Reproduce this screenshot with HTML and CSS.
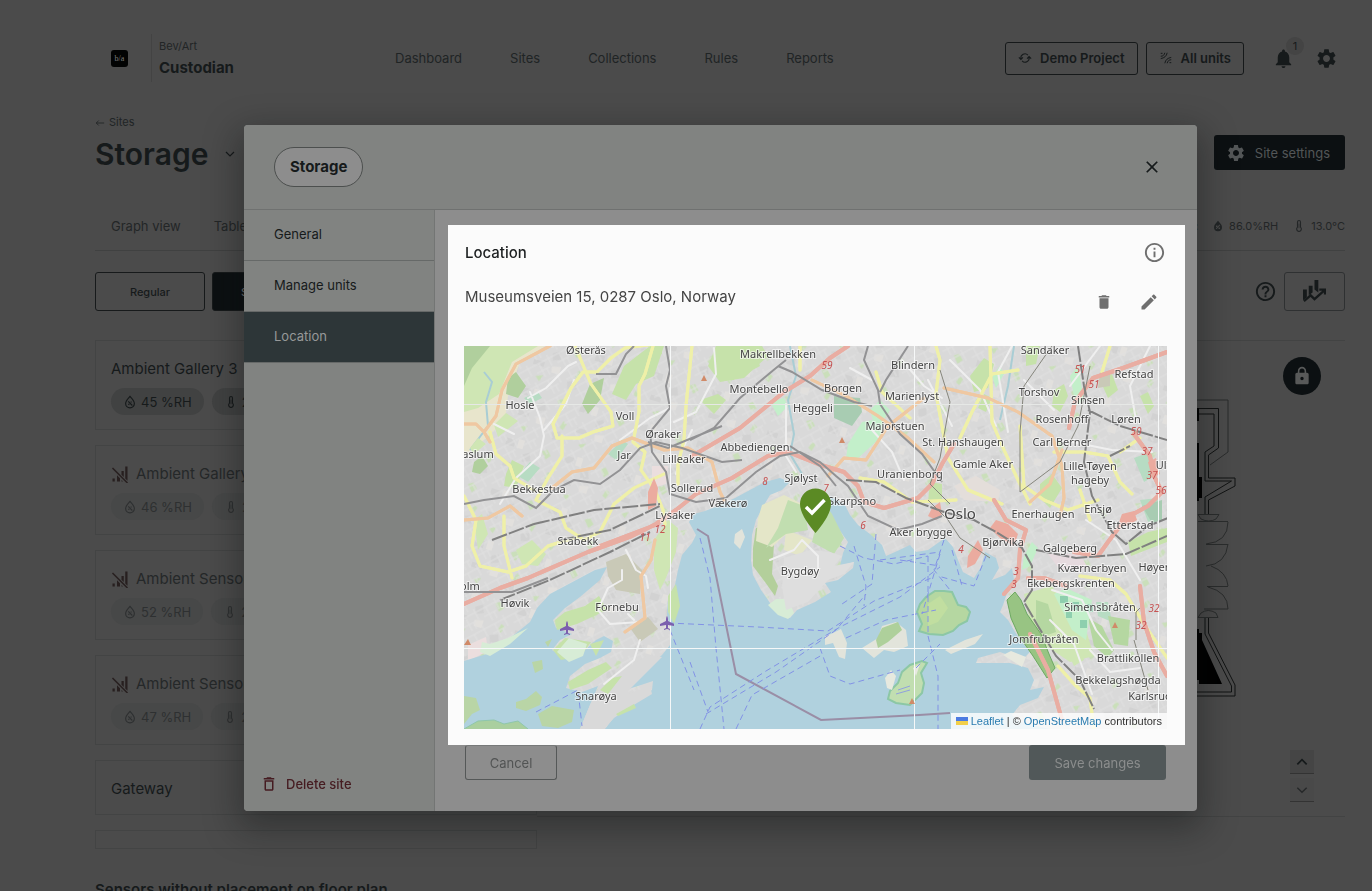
FILE: index.html
```html
<!DOCTYPE html>
<html lang="en">
<head>
<meta charset="utf-8">
<meta name="viewport" content="width=device-width, initial-scale=1">
<title>Custodian – Storage</title>
<link rel="stylesheet" href="styles.css">
</head>
<body>
<svg class="sprite" aria-hidden="true">
  <symbol id="i-gear" viewBox="0 0 24 24"><path d="M19.14 12.94c.04-.3.06-.61.06-.94 0-.32-.02-.64-.07-.94l2.03-1.58c.18-.14.23-.41.12-.61l-1.92-3.32c-.12-.22-.37-.29-.59-.22l-2.39.96c-.5-.38-1.03-.7-1.62-.94l-.36-2.54c-.04-.24-.24-.41-.48-.41h-3.84c-.24 0-.43.17-.47.41l-.36 2.54c-.59.24-1.13.57-1.62.94l-2.39-.96c-.22-.08-.47 0-.59.22L2.74 8.87c-.12.21-.08.47.12.61l2.03 1.58c-.05.3-.09.63-.09.94s.02.64.07.94l-2.03 1.58c-.18.14-.23.41-.12.61l1.92 3.32c.12.22.37.29.59.22l2.39-.96c.5.38 1.03.7 1.62.94l.36 2.54c.05.24.24.41.48.41h3.84c.24 0 .44-.17.47-.41l.36-2.54c.59-.24 1.13-.56 1.62-.94l2.39.96c.22.08.47 0 .59-.22l1.92-3.32c.12-.22.07-.47-.12-.61l-2.01-1.58zM12 15.6c-1.98 0-3.6-1.62-3.6-3.6s1.62-3.6 3.6-3.6 3.6 1.62 3.6 3.6-1.62 3.6-3.6 3.6z"/></symbol>
  <symbol id="i-bell" viewBox="0 0 24 24"><path d="M12 22c1.1 0 2-.9 2-2h-4c0 1.1.9 2 2 2zm6-6v-5c0-3.070-1.640-5.640-4.500-6.320V4c0-.83-.67-1.500-1.500-1.500s-1.500.67-1.500 1.500v.68C7.630 5.360 6 7.920 6 11v5l-2 2v1h16v-1l-2-2z"/></symbol>
  <symbol id="i-sync" viewBox="0 0 24 24"><g fill="none" stroke="currentColor" stroke-width="1.8"><path d="M5 13a7 7 0 0 1 12-6M19 11a7 7 0 0 1-12 6M1.500 11L5 14.500 8.500 11M15.500 13L19 9.500 22.500 13"/></g></symbol>
  <symbol id="i-units" viewBox="0 0 24 24"><g fill="none" stroke="currentColor" stroke-width="1.700"><path d="M3 4h3M3 9c4 0 6-2 7-6M3 13c6-1 10-4 11-10M21 20h-3M21 15c-4 0-6 2-7 6M21 11c-6 1-10 4-11 10"/></g></symbol>
  <symbol id="i-down" viewBox="0 0 24 24"><path fill="none" stroke="currentColor" stroke-width="2.400" d="M4 8l8 8 8-8"/></symbol>
  <symbol id="i-up" viewBox="0 0 24 24"><path fill="none" stroke="currentColor" stroke-width="3" d="M4 16l8-8 8 8"/></symbol>
  <symbol id="i-back" viewBox="0 0 24 24"><path fill="none" stroke="currentColor" stroke-width="2" d="M22 12H3M9 6l-6 6 6 6"/></symbol>
  <symbol id="i-drop" viewBox="0 0 24 24"><path fill="none" stroke="currentColor" stroke-width="2" d="M12 2.500C8 7 4.500 10.500 4.500 14.500a7.500 7.500 0 0 0 15 0C19.500 10.500 16 7 12 2.500zM9 11l7 7M9 16h2M13 12h2"/></symbol>
  <symbol id="i-dropfill" viewBox="0 0 24 24"><path fill-rule="evenodd" d="M12 1.500C8 6 4 10 4 14.500a8 8 0 0 0 16 0C20 10 16 6 12 1.500zM8 11h3v3H8zM13 15h3v3h-3zM15 9l1.500 1.500-7.500 8L7.500 17z"/></symbol>
  <symbol id="i-thermo" viewBox="0 0 24 24"><path fill="none" stroke="currentColor" stroke-width="2" d="M9.500 14V5a2.500 2.500 0 0 1 5 0v9a4 4 0 1 1-5 0z"/><path d="M11.500 8h1v8h-1z"/></symbol>
  <symbol id="i-nosignal" viewBox="0 0 24 24"><path d="M2 18h3v4H2zM8 13.500l4 4V22H8zM14 20l2 2h-2zM14 8h3v8l-3-3zM19 2h3v19l-3-3z"/><path fill="none" stroke="currentColor" stroke-width="2" d="M2 4l20 20"/></symbol>
  <symbol id="i-help" viewBox="0 0 24 24"><path d="M11 18h2v-2h-2v2zm1-16C6.480 2 2 6.480 2 12s4.480 10 10 10 10-4.480 10-10S17.520 2 12 2zm0 18c-4.410 0-8-3.590-8-8s3.590-8 8-8 8 3.590 8 8-3.590 8-8 8zm0-14c-2.210 0-4 1.790-4 4h2c0-1.100.9-2 2-2s2 .9 2 2c0 2-3 1.750-3 5h2c0-2.250 3-2.500 3-5 0-2.210-1.790-4-4-4z"/></symbol>
  <symbol id="i-info" viewBox="0 0 24 24"><path d="M11 7h2v2h-2zm0 4h2v6h-2zm1-9C6.480 2 2 6.480 2 12s4.480 10 10 10 10-4.480 10-10S17.520 2 12 2zm0 18c-4.410 0-8-3.590-8-8s3.590-8 8-8 8 3.590 8 8-3.590 8-8 8z"/></symbol>
  <symbol id="i-chart" viewBox="0 0 24 24"><path d="M0 10h4v8l-4 3zM6 6h4v7l-4 3zM12 0h4v13l-4-3z"/><path fill="none" stroke="currentColor" stroke-width="2.400" d="M1 22l7-6 4 4 10-9M17 10h6v5"/></symbol>
  <symbol id="i-lock" viewBox="0 0 24 24"><path d="M18 8h-1V6c0-2.760-2.240-5-5-5S7 3.240 7 6v2H6c-1.100 0-2 .9-2 2v10c0 1.100.9 2 2 2h12c1.100 0 2-.9 2-2V10c0-1.100-.9-2-2-2zm-6 9c-1.100 0-2-.9-2-2s.9-2 2-2 2 .9 2 2-.9 2-2 2zm3.100-9H8.900V6c0-1.710 1.390-3.100 3.100-3.100 1.710 0 3.100 1.390 3.100 3.100v2z"/></symbol>
  <symbol id="i-close" viewBox="0 0 24 24"><path d="M19 6.410L17.590 5 12 10.590 6.410 5 5 6.410 10.590 12 5 17.590 6.410 19 12 13.410 17.590 19 19 17.590 13.410 12z"/></symbol>
  <symbol id="i-trash" viewBox="0 0 24 24"><path d="M6 19c0 1.100.9 2 2 2h8c1.100 0 2-.9 2-2V7H6v12zM19 4h-3.500l-1-1h-5l-1 1H5v2h14V4z"/></symbol>
  <symbol id="i-trashline" viewBox="0 0 24 24"><path d="M6 19c0 1.100.9 2 2 2h8c1.100 0 2-.9 2-2V7H6v12zM8 9h8v10H8V9zm7.500-5l-1-1h-5l-1 1H5v2h14V4z"/></symbol>
  <symbol id="i-edit" viewBox="0 0 24 24"><path d="M3 17.250V21h3.750L17.810 9.940l-3.750-3.750L3 17.250zM20.710 7.040c.39-.39.39-1.020 0-1.410l-2.340-2.340c-.39-.39-1.020-.39-1.410 0l-1.830 1.830 3.750 3.750 1.830-1.830z"/></symbol>
</svg>

<div class="page">
  <header class="topbar">
    <div class="brand">
      <span class="logo">b/a</span>
      <div class="brand-text"><span class="brand-sub">Bev/Art</span><strong class="brand-name">Custodian</strong></div>
    </div>
    <nav class="nav">
      <a href="#">Dashboard</a><a href="#">Sites</a><a href="#">Collections</a><a href="#">Rules</a><a href="#">Reports</a>
    </nav>
    <div class="actions">
      <button class="outline-btn"><svg class="icon s14"><use href="#i-sync"/></svg>Demo Project</button>
      <button class="outline-btn"><svg class="icon s14"><use href="#i-units"/></svg>All units</button>
      <button class="bare bell" aria-label="Notifications"><svg class="icon s24"><use href="#i-bell"/></svg><span class="badge">1</span></button>
      <button class="bare" aria-label="Settings"><svg class="icon s24"><use href="#i-gear"/></svg></button>
    </div>
  </header>

  <main>
    <div class="title-row">
      <div>
        <a class="back" href="#"><svg class="icon s10"><use href="#i-back"/></svg>Sites</a>
        <h1 class="title">Storage<svg class="icon s12"><use href="#i-down"/></svg></h1>
      </div>
      <button class="dark-btn"><svg class="icon s20"><use href="#i-gear"/></svg>Site settings</button>
    </div>

    <div class="tabs">
      <a href="#">Graph view</a><a href="#">Table view</a>
      <div class="stats"><span>Oslo:</span><span><svg class="icon s12"><use href="#i-dropfill"/></svg>86.0%RH</span><span><svg class="icon s14"><use href="#i-thermo"/></svg>13.0°C</span></div>
    </div>

    <div class="tools">
      <button class="mode-btn">Regular</button>
      <button class="mode-btn mode-on">Simplified</button>
      <button class="bare help" aria-label="Help"><svg class="icon s24"><use href="#i-help"/></svg></button>
      <button class="chart-btn" aria-label="Graphs"><svg class="icon s24"><use href="#i-chart"/></svg></button>
    </div>

    <div class="workspace">
      <div class="list">
        <article class="card"><h2>Ambient Gallery 3</h2><div class="chips"><span><svg class="icon s14"><use href="#i-drop"/></svg>45 %RH</span><span><svg class="icon s14"><use href="#i-thermo"/></svg>21 °C</span></div></article>
        <article class="card muted"><h2><svg class="icon s18"><use href="#i-nosignal"/></svg>Ambient Gallery</h2><div class="chips"><span><svg class="icon s14"><use href="#i-drop"/></svg>46 %RH</span><span><svg class="icon s14"><use href="#i-thermo"/></svg>21 °C</span></div></article>
        <article class="card muted"><h2><svg class="icon s18"><use href="#i-nosignal"/></svg>Ambient Sensor</h2><div class="chips"><span><svg class="icon s14"><use href="#i-drop"/></svg>52 %RH</span><span><svg class="icon s14"><use href="#i-thermo"/></svg>21 °C</span></div></article>
        <article class="card muted"><h2><svg class="icon s18"><use href="#i-nosignal"/></svg>Ambient Sensor</h2><div class="chips"><span><svg class="icon s14"><use href="#i-drop"/></svg>47 %RH</span><span><svg class="icon s14"><use href="#i-thermo"/></svg>21 °C</span></div></article>
        <article class="card card-short"><h2>Gateway</h2></article>
        <article class="card-empty"></article>
      </div>
      <section class="plan" aria-label="Floor plan">
        <svg class="plan-drawing" viewBox="1180 390 70 320" aria-hidden="true">
          <path class="thin" d="M1180 401H1228V453L1210 466"/>
          <path class="wall" d="M1180 409.500H1218.500V449L1208.500 456V479H1235V487L1208.500 501V515M1180 415H1214V447L1205 453V482M1205 482H1231.500L1205 498V515M1208.500 618V634L1235 686V697H1180M1205 618V635L1231.500 687V693H1180"/>
          <path class="thin" d="M1198 515.500H1219L1216 520Q1209 524 1201 520ZM1198 522.500H1228M1228 523Q1228 543 1206 545M1228 545Q1226 565 1206 567M1211 567Q1227 573 1228 587M1208 588Q1228 593 1228 610M1206 545.500H1228M1207 587.500H1228M1204 610H1228M1198 618.500H1218L1216 614Q1208 609 1201 614Z"/>
          <path d="M1180 409h19v13h-19zM1180 444h19v34h3v21h-3v3h-19zM1180 630h19v4h3v7l20 44h-23v-4h-19z"/>
        </svg>
        <button class="lock" aria-label="Unlock floor plan"><svg class="icon s20"><use href="#i-lock"/></svg></button>
        <div class="steps">
          <button aria-label="Floor up"><svg class="icon s14"><use href="#i-up"/></svg></button>
          <button disabled aria-label="Floor down"><svg class="icon s14"><use href="#i-down"/></svg></button>
        </div>
      </section>
    </div>
    <h2 class="unplaced">Sensors without placement on floor plan</h2>
  </main>
</div>

<div class="overlay">
  <div class="modal" role="dialog" aria-label="Site settings">
    <header class="modal-head">
      <span class="pill">Storage</span>
      <button class="bare" aria-label="Close"><svg class="icon s20"><use href="#i-close"/></svg></button>
    </header>
    <div class="modal-main">
      <nav class="side">
        <a href="#">General</a><a href="#">Manage units</a><a class="current" href="#" aria-current="page">Location</a>
        <button class="delete"><svg class="icon s18"><use href="#i-trashline"/></svg>Delete site</button>
      </nav>
      <div class="pane">
        <section class="spot">
          <div class="spot-row"><h2>Location</h2><button class="bare" aria-label="Information"><svg class="icon s24"><use href="#i-info"/></svg></button></div>
          <div class="addr-row"><p>Museumsveien 15, 0287 Oslo, Norway</p><div class="addr-tools"><button class="bare" aria-label="Delete location"><svg class="icon s18"><use href="#i-trash"/></svg></button><button class="bare" aria-label="Edit location"><svg class="icon s20"><use href="#i-edit"/></svg></button></div></div>
          <div class="map">
            <svg class="map-art" viewBox="464 346 703 383" preserveAspectRatio="xMidYMid slice" role="img" aria-label="Map of Oslo">
              <defs>
                <pattern id="streets" width="23" height="19" patternUnits="userSpaceOnUse" patternTransform="rotate(-28)"><path class="street" d="M0 4H23M0 12H14M6 4V19M17 0V12M11 12V19"/></pattern>
                <pattern id="blocks" width="61" height="53" patternUnits="userSpaceOnUse" patternTransform="rotate(17)"><path fill="#d2d2d2" d="M3 5h9v7H3zM22 17l7-4 3 8-8 3zM6 28h11v5H6zM44 40l8-3 3 8-9 2z"/><path fill="#e2e0dd" d="M15 3h6v9h-6zM25 30l9-2v8h-8z"/><path fill="#cadfba" d="M40 8l5-3 5 5-4 5zM12 44l7-3-2 7zM52 26l4 2-2 7-4-2z"/></pattern>
              </defs>
              <rect x="464" y="346" width="703" height="383" fill="#d9d9d9"/>
              <rect x="464" y="346" width="703" height="383" fill="url(#blocks)"/>
              <rect x="464" y="346" width="703" height="383" fill="url(#streets)"/>

              <path fill="#e8e5cc" d="M464 362L494 346H545L520 362 508 396 505 420 484 440 464 455Z"/>
              <path fill="#cfe6b4" d="M464 346H538L512 362 499 394 478 408 464 412ZM494 425l12-12 12 8-20 16Z"/>
              <path fill="#b0cf9d" d="M464 346h26l-18 22-8 18ZM508 378l8-6 10 14-8 12-12-4ZM582 404l8-20 14-6-4 22-12 14ZM474 462l8-6 6 10-8 8-8-2Z"/>
              <path fill="none" stroke="#a9cdd4" stroke-width="2" d="M484 372l8 10-6 20 2 24-18 24M790 346l6 30-8 24 6 34-4 20 12 20M1014 346l-6 40-8 34"/>
              <path fill="#c6e2aa" d="M612 394l12-28 26-20h14l-10 30-18 8-10 16ZM506 474l6-14 12 6-8 22-12-2ZM648 346h14v8l-8 4ZM716 346h46l6 10-24 22-24 4-12-16ZM700 400l18-6 8 6-12 14ZM736 346l20 8 4 12-26 14-18-4Z"/>
              <path fill="#b7dcc3" d="M518 476l12-14 10 6-12 14ZM608 454l14-14 6 4-12 16ZM524 398l14-6 4 6-12 6ZM1134 458l16-6 8 22-14 8ZM1140 500l18-2 4 18-14 6ZM1096 602l12 0 4 20-14-6Z"/>
              <path fill="#a8ccb2" d="M834 396l26 2 2 14-10 14-18-8ZM1142 506l20-6v20l-10 3Z"/>
              <path fill="#c3efca" d="M848 444l14-22 22-4-4 20-24 22-10-2ZM870 410l10-10 10 10-14 20ZM770 402l14-4 4 8-10 10ZM992 376l8-10 4 8-8 14ZM1070 376l8-10 6 34-8 6Z"/>
              <path fill="#c6e2aa" d="M1026 346l14 0-4 18-10 2ZM970 376l14-18 10 6-6 24-14 4ZM1054 390l10-6 4 12-8 16-8-6ZM1040 484l12-10 10 14-12 20-10-10ZM930 482l12 2 0 16-14 2ZM1128 542l20-10 19-4v14l-36 14ZM984 394l8 4-6 14-8-4ZM1100 380l12-6 6 16-10 8ZM1140 396l8-4 6 14-6 8Z"/>
              <path fill="#cfe6b4" d="M1024 594l28-8 12 18 22 26 8 26-24 6-36-24ZM470 448l8-10 8 6-12 10ZM474 520l8-6 6 20-10 16ZM516 550l16-10 14 14-8 12-16-2ZM654 540l14-20 10 8-2 24-10 26-6 12-6-20ZM1062 640l14-2 8 22-10 6Z"/>
              <path fill="#b5d7a1" d="M1036 600l12 4 8 28-12 4-8-16ZM1088 618l14 8 12 24-6 8-14-12ZM1108 616l22 4-2 26-14-2Z"/>
              <path fill="#c3efca" d="M1054 594l12-6 26 12-6 40-14-10ZM1024 556l8-14 6 6-8 18-8 4Z"/>
              <path fill="#8ecfae" d="M1060 596h8v7h-8zM1072 602h7v8h-7zM1066 612h6v6h-6zM1080 620h7v8h-7zM1087 604h6v8h-6z"/>
              <path fill="#e6dade" d="M1048 554h32l8 14-28 2Z"/>
              <path fill="#e4deda" d="M954 486l22-10 24 14-2 12-34-2Z"/>
              <path fill="#c9c9b7" d="M606 562l20-8 16 16-2 24-24-4-8-14ZM630 628l18-11 10 12-18 13ZM1100 372l10 0 0 14-12 2Z"/>
              <path fill="#ebdede" d="M652 466l16 0-2 18-14 4ZM468 645l18-8 2 14-20 10Z"/>

              <path fill="#b0d1de" d="M464 661L490 653 515 634 530 622 537 608 550 594 580 578 595 570 607 567 600 580 580 597 565 608 553 620 556 628 572 634 560 640 552 650 563 657 585 650 596 640 604 636 613 641 611 652 600 658 585 664 570 676 566 688 582 692 598 686 590 705 580 729H605L615 716 635 702 652 690 653 681 638 686 625 690 634 680 650 665 662 655 670 645 672 635 667 615 668 600 675 585 678 570 682 555 692 543 696 535 689 522 694 514 705 511 718 506 735 498 748 491 765 482 780 478 790 482 782 490 770 495 764 505 756 520 752 535 751 560 753 575 761 590 768 600 776 612 790 618 797 610 815 602 831 592 825 583 838 580 853 568 854 562 840 566 843 553 848 542 838 528 830 515 826 502 831 496 845 505 850 515 858 525 870 534 882 545 886 556 895 552 910 545 916 552 928 550 945 538 953 547 958 560 963 572 974 578 981 567 985 552 996 558 999 568 992 580 1005 575 1012 568 1014 580 1008 590 1003 605 1000 612 1008 620 1015 632 1022 642 1030 652 1022 660 1000 652 978 658 976 663 1010 663 1028 668 1034 680 1030 690 1044 687 1038 698 1020 705 1012 715 1020 722 1050 729H605L464 729Z"/>
              <path fill="#d9d9d9" d="M580 729l10-24 10-20 22-14 26-16 14 2-28 28-10 10 26-9 2 8-20 12-18 12-10 11Z"/>
              <path fill="#c6e2aa" d="M553 650l12-12 26 4-10 14-20 4ZM555 620l10-8 20-6 14-10 8 14-30 14-20 6ZM568 682l20-12 18-8 6 6-24 16-18 6ZM600 690l12-12 10-2-14 18ZM616 714l18-10 2 4-18 8ZM590 644l14-4-8 16ZM668 596l8-12 4 22-6 18-6-12Z"/>
              <path fill="#d7ecd6" d="M557 652l12-14 18 6-4 12-14 6ZM482 642l8 2 18-6 20-10-18 16-20 12-10-4ZM768 605l8-6 12 0 6 14-6 6-10-4Z"/>
              <path fill="#b9d5a6" d="M464 696l12 2 4 12-8 4-8 10ZM516 702l10-3 10-8 6 6-2 8-14 6-10-3ZM538 714l14-8 22 4-2 12-14 6-16-2ZM545 642l7-3-4 8ZM532 662l10-2 1 9-8 4Z"/>
              <path fill="#aacf9f" stroke="#8fc7ab" d="M464 729l14-8 16-1 10 4 14-3 10 8"/>
              <path fill="#b3cf9b" d="M756 528l14-4 4 20-2 30 6 12-3 10-10-14-12-16 0-18Z"/>
              <path fill="#e4e6c8" d="M762 505l22-10 20 10-8 20-24 22-16-6 2-22ZM786 530l26 10-12 16-16-6Z"/>
              <path fill="#c1deb0" d="M788 500l16 6 4 24-22 4-20 14 12-20ZM822 500l10 14 12 24-10 16-22-12ZM784 590l8-12 2 14-6 12Z"/>
              <path fill="#dedede" d="M784 558l26-8 20 2 12 4-8 10 20-4-10 12-16 6-20 22-22 8-4-24Z"/>
              <path fill="#e2e4db" d="M735 534l7-5 3 8-5 12-6-6ZM825 636l6-2 10-5 6 14-2 16-6-2-6-14-8 2ZM862 648l16-10 4-12 14-4 10 8 2 16-14 6-10-2-10 8ZM945 650l20-10 18-6-8 10-24 10Z"/>
              <path fill="#aed09b" d="M876 640l6-12 16-6 4 8-14 12-10 6Z"/>
              <path fill="#b5d7a1" stroke="#8cc7a5" stroke-width="2" d="M917 612l3-8 6-7 9-6 9 0 8 1 6 13 8 2 4 5-3 9-8 4-6 6-10 4-14-1-10-3 3-7Z"/>
              <path fill="#c1dea0" d="M928 604l12-8 8 12-10 14-10 4Z"/>
              <path fill="#c1deb0" stroke="#8cc7a5" stroke-width="2" d="M902 672l8-7 12-4 5 2-6 10 3 10-2 10-12 12-14-2-8-4 2-8 8-8Z"/>
              <path fill="#e7e9df" d="M885 678l6-8 5 6-4 14-5-2ZM913 668l7-4-4 12ZM1003 655l8-4 15 6-4 10Z"/>
              <path fill="none" stroke="#90a0de" stroke-width="1" d="M898 690l12-4M896 694l14-4"/>
              <path fill="#98c483" stroke="#6da962" d="M1007 600l8-8 6 8 6 14 14 20 8 20 6 14-8 10-14-22-14-20-8-18Z"/>

              <g class="wroad"><path d="M528 398l18-10 22-22 8-4M530 392l10 26 4 18-4 20-24 22-16 26M544 430l22-26 8-24M620 440l30-22 20-10 0-20M692 430l-10 20-6 24M714 348l2 26-20 38-22 10M786 404l0 52 10 16M872 380l-22-12M902 360l22 26 18 12M872 430l20 22 12 28M928 380l24 46M950 360l30 30 16 36M1012 346l-14 26 10 60M1024 380l30 30M1100 346l-30 40M1150 346l-20 40 6 34M1062 440l50 10 40 2M1086 520l30 20 24 40M1052 590l30 10 14 30 16 20M1090 650l20 22 30-4M626 550l10 20 10 6 2 12M598 610l10-22 14-8 0 -10M634 620l-6-6M640 640l-6 20-30 24M598 610l12 14 30-2M494 424l20 10M770 560l24-10 8-10 16 16 0 14-34 4M1050 620l24 24 18 50"/></g>
              <g class="ycase"><use href="#yroads"/></g>
              <g class="yroad" id="yroads"><path d="M575 346l16 38 20 28 2 14-20 6-14 6-22 0-4-14 18-36 12-16 14 0 14-14 14-10 30-4M653 346l-8 28 -6 12 0 26-6 30 12 10-4 18 14 20 8 20 2 14M562 436l0 20-14 22-12 22 24 12 6 16 18 12 16-8 14-28 20-16 30-14M490 432l6 22 14 12 4 12 20 12M464 496l12 24-4 26 8 20 28 6 18-6 22-20 32-10M504 516l0 30 8 32M692 346l-6 60-2 34-6 24 0 20M800 346l0 24M876 372l6 20 28 26M990 346l2 76 12 28 14 30 12 24M936 346l4 14-4 34 12 64 20 32 34 14M1018 370l-26 4-20 38-12 26M1020 426l4 60 20 14 24 10 30-10M1054 452h30l24 4 12 26 12 12M1120 452l20-14M860 478l24 4 28 20 44-2M1080 576l30 4 16 14 18 30 23 34M1058 666l16 18 16 14 4 31M1110 346l-8 26M1080 490l10 30"/></g>
              <g class="ocase"><use href="#oroads"/></g>
              <g class="oroad" id="oroads"><path d="M550 346l-34 18-14 26-6 26-12 16M464 424l12 0 8 8 6 10M552 488l20-16 22-4 18-22 20-8 32 12 24-2 24 14 8 30 4 8M464 520l24-2 22-12 12 10M655 540l-4 20-10 16 4 42-20 14M812 380l34 16 32 20 30 22 26 24M944 388l44 10 30 14 34 24 10 30 2 32-4 18M828 476l16-18 22 2 22-34 36-28M1062 450l-12 34-20 18"/></g>
              <g class="rcase"><use href="#rroads"/></g>
              <g class="rroad" id="rroads"><path d="M464 604l36-16 28-10 60-26 44-16 24-12 20-14 20-16 36-16 36-22 20-4 30 12 26 8 14 14 6 16 20 6 34-10 14-14 10-20 12-20M692 456l48-28 44-36 26-16 20-18 18-12M1167 352l-44 16-30 10-18 24-6 26M1134 434l16 22 4 20 8 16-14 14-22 12-18 24-10 14-24-4M994 500l12 20 20 10-6 20-2 28-14 16M1140 586l4 36 10 30 13 24M1030 634l18 36 14 50M600 546l58-22M1028 578l16 0 22 8"/></g>
              <path fill="#ebab9f" d="M996 520l12 4 10 10-4 12-14-8-10-10ZM932 508l8-6 2 12-6 6-8-4ZM968 556l10-16 5 10-8 14-8 4ZM1148 462l8-4 4 16-8 4ZM648 492l6-14 4 10-2 18-8 4ZM1122 514l12-3 3 9-10 6-8-4Z"/>

              <g class="rail"><path d="M464 504l20-4 30-4 22 12 18-18 20-10 26 4 20-14 20-22 16-6 26 6 40 14 20-2M666 346l4 24 -4 16 4 22-20 24 2 20 14 20 4 22 26 8 30-4 30-26 24-16 20-4 20 10 16 14 12 10 20 30 30 14 24-6 20-8M690 440l24-12 26-30 36-30 10-8M778 366l14 6 30 18 32 12 18 4M868 346l-4 14 14 30 2 14 20 30 22 20 20 28M908 346l-22 34-6 12M464 592h48l36-14M648 442l20 6 24-10 30-12M596 374h20l10-20 8-8M790 446l30 20 16 20"/></g>
              <g class="railb"><path d="M534 524l60-14 66-6M492 540l42-16M560 540l50-10 50-24M500 600l50-20 60-28 40-20M846 480l30 2 30 16 38 14 30 8 22 12 26 16 10 18 0 24 -8 12 14 24 18 30 24 24 14 29M1078 346l6 40 6 26-6 50 8 34 20 36 14 12 22-18 20-8M1088 410l32 16 47 14M1036 550l40 8 50-4 41-18M1110 456l20-10"/></g>
              <path class="tram" d="M1052 346l-28 40-4 46v60l40-30 18-36 12-60M940 370l10 32-10 56-10 26 20 20M1136 640l0-28 4-4M1134 640l14 50M928 500l20 20 12 18 30 20"/>
              <path class="border" d="M697 529l11 7 28 138 85 46 98-5 31-2"/>
              <g class="ferry"><path d="M668 623l90 4 70 4 46-30 60-24M700 538l10 40 6 70 8 81M690 662l18 50M700 729l10-22 56-36 74-44 60-30 40-30M706 714l70-42 60-42 30-36M736 729l16-34 70-40M840 546l24 12 30 6 34-8M854 546l12 40 -2 20M876 534l-4 50-30 20M820 648l10 28 20 8 50-14M846 638l40-18 50-10M928 556l0 80 10 40 0 54M900 560l40 6M940 554l-18 60M952 550l10 36M986 556l-12 30-36-10M536 712l42-22 4 36M944 540l-10 30 16 20M880 560l60-8M916 668l24-24M670 630l24 60"/></g>
              <path class="tile-soft" d="M464 404.500H1167"/>
              <path class="tile" d="M670.500 346V729M914.500 346V729M1158.500 346V729M464 648.500H1167"/>

              <path fill="#d08a68" d="M701 381l3-6 3 6zM839 443l3-6 3 6zM909 704l3-6 3 6zM1112 628l3-6 3 6zM464 645l4-6 3 6z"/>
              <g fill="#7b5fae"><path id="plane" d="M567 621c-1 1-1 3-1 5l-6 3v2l6-1v3l-2 1v1l3-1 3 1v-1l-2-1v-3l6 1v-2l-6-3c0-2 0-4-1-5z"/><use href="#plane" x="100" y="-5"/></g>
              <g class="refs"><text x="827" y="369">59</text><text x="765" y="485">8</text><text x="826" y="492">7</text><text x="863" y="529">6</text><text x="660" y="533">12</text><text x="645" y="541">11</text><text x="1094" y="388">51</text><text x="1080" y="373">51</text><text x="1136" y="435">50</text><text x="1147" y="455">37</text><text x="1152" y="479">37</text><text x="1161" y="494">56</text><text x="1154" y="612">32</text><text x="1141" y="629">32</text><text x="1016" y="575">3</text><text x="1014" y="588">3</text><text x="961" y="553">4</text></g>
              <g class="places">
                <text x="586" y="354">Østerås</text><text x="520" y="409">Hosle</text><text x="625" y="420">Voll</text><text x="663" y="438">Øraker</text><text x="624" y="459">Jar</text><text x="684" y="463">Lilleaker</text><text x="478" y="458">aslum</text><text x="539" y="493">Bekkestua</text><text x="692" y="492">Sollerud</text><text x="675" y="519">Lysaker</text><text x="728" y="507">Vækerø</text><text x="578" y="545">Stabekk</text><text x="515" y="607">Høvik</text><text x="470" y="590">olm</text><text x="617" y="611">Fornebu</text><text x="596" y="700">Snarøya</text><text x="778" y="358">Makrellbekken</text><text x="759" y="393">Montebello</text><text x="843" y="392">Borgen</text><text x="813" y="412">Heggeli</text><text x="913" y="369">Blindern</text><text x="912" y="400">Marienlyst</text><text x="895" y="430">Majorstuen</text><text x="755" y="451">Abbediengen</text><text x="801" y="482">Sjølyst</text><text x="852" y="505">Skarpsno</text><text x="910" y="478">Uranienborg</text><text x="921" y="536">Aker brygge</text><text x="800" y="575">Bygdøy</text><text x="963" y="446">St. Hanshaugen</text><text x="983" y="468">Gamle Aker</text><text x="960" y="519" class="city">Oslo</text><text x="1045" y="354">Sandaker</text><text x="1039" y="396">Torshov</text><text x="1134" y="378">Refstad</text><text x="1088" y="404">Sinsen</text><text x="1062" y="423">Rosenhoff</text><text x="1126" y="423">Løren</text><text x="1062" y="446">Carl Berner</text><text x="1090" y="470">Lille Tøyen</text><text x="1090" y="484">hageby</text><text x="1043" y="518">Enerhaugen</text><text x="1098" y="513">Ensjø</text><text x="1130" y="529">Etterstad</text><text x="1003" y="546">Bjørvika</text><text x="1070" y="552">Galgeberg</text><text x="1092" y="572">Kværnerbyen</text><text x="1155" y="571">Høyen</text><text x="1071" y="587">Ekebergskrenten</text><text x="1100" y="611">Simensbråten</text><text x="1044" y="643">Jomfrubråten</text><text x="1128" y="662">Brattlikollen</text><text x="1118" y="684">Bekkelagshøgda</text><text x="1150" y="700">Karlsrud</text><text x="1164" y="469">Ulv</text>
              </g>
              <path fill="#5b8a24" d="M815.500 533Q800 515 800 504A15.500 15.500 0 0 1 831 504Q831 515 815.500 533Z"/>
              <path fill="none" stroke="#fff" stroke-width="3.500" d="M806 507l6 6 12.500-13"/>
            </svg>
            <p class="credit"><svg class="flag" viewBox="0 0 12 8" aria-hidden="true"><path fill="#4c7be1" d="M0 0h12v4H0z"/><path fill="#f2cf4a" d="M0 4h12v4H0z"/></svg> <a href="#">Leaflet</a> | © <a href="#">OpenStreetMap</a> contributors</p>
          </div>
        </section>
        <div class="pane-foot"><button class="cancel">Cancel</button><button class="save" disabled>Save changes</button></div>
      </div>
    </div>
  </div>
</div>
</body>
</html>
```
FILE: styles.css
```css
* { box-sizing: border-box; }
html { height: 100%; }
body {
  margin: 0;
  height: 100%;
  overflow: hidden;
  background: #4b4b4b;
  color: #161a1b;
  font-family: Inter, "Liberation Sans", sans-serif;
  font-size: 14px;
}
h1, h2, p { margin: 0; }
a { color: inherit; text-decoration: none; }
button { font: inherit; color: inherit; cursor: pointer; }
.sprite { position: absolute; width: 0; height: 0; }
.icon { display: block; flex: none; fill: currentColor; }
.s10 { width: 10px; height: 10px; }
.s12 { width: 12px; height: 12px; }
.s14 { width: 14px; height: 14px; }
.s18 { width: 18px; height: 18px; }
.s20 { width: 20px; height: 20px; }
.s24 { width: 23px; height: 23px; }
.bare { display: flex; padding: 0; border: 0; background: none; }

/* Page behind the dialog */
.page { padding: 0 27px 0 95px; }
.topbar { display: flex; align-items: center; height: 116px; }
.brand { display: flex; align-items: center; width: 300px; padding-left: 16px; gap: 23px; }
.logo {
  display: grid; place-items: center; width: 17px; height: 17px;
  border-radius: 3px; background: #020303; color: #7c7c7c; font: 8px "Liberation Serif", serif;
}
.brand-text { display: flex; flex-direction: column; gap: 4px; padding: 4px 0 4px 7px; border-left: 1px solid #434343; }
.brand-sub { font-size: 11px; line-height: 16px; color: #222526; }
.brand-name { font-size: 15px; line-height: 20px; }
.nav { display: flex; gap: 48px; font-size: 13px; color: #202425; }
.actions { display: flex; align-items: center; gap: 8px; margin-left: auto; padding-right: 7px; }
.outline-btn {
  display: flex; align-items: center; gap: 8px; height: 33px; padding: 0 12px;
  border: 1px solid #16191a; border-radius: 3px; background: none; font-size: 13px; font-weight: 600;
}
.bell { position: relative; margin: 0 12px 0 20px; }
.badge {
  position: absolute; top: -10px; left: 14px; width: 18px; height: 18px; border-radius: 50%;
  background: #444; font-size: 11px; line-height: 18px; text-align: center;
}
.title-row { display: flex; align-items: flex-start; justify-content: space-between; height: 86px; }
.back { display: flex; align-items: center; gap: 4px; font-size: 11px; line-height: 13px; color: #202425; }
.title { display: flex; align-items: center; gap: 16px; margin-top: 5px; font-size: 30px; line-height: 40px; font-weight: 600; }
.dark-btn {
  display: flex; align-items: center; gap: 9px; height: 35px; margin-top: 19px; padding: 0 15px 0 12px;
  border: 0; border-radius: 3px; background: #0c1012; color: #535657; font-size: 13px;
}
.tabs { display: flex; align-items: center; gap: 33px; height: 49px; padding-left: 16px; border-bottom: 1px solid #404141; font-size: 13px; color: #232627; }
.stats { display: flex; gap: 14px; margin-left: auto; font-size: 11px; }
.stats span { display: flex; align-items: center; gap: 5px; }
.tools { display: flex; align-items: center; gap: 7px; margin: 21px 0 29px; }
.mode-btn { width: 110px; height: 39px; border: 1px solid #171a1b; border-radius: 3px; background: none; font-size: 11px; font-weight: 500; }
.mode-on { background: #0c1012; color: #636566; }
.help { margin-left: auto; }
.chart-btn { display: grid; place-items: center; width: 61px; height: 39px; border: 1px solid #2f3132; border-radius: 3px; background: none; }
.workspace { display: flex; align-items: flex-start; }
.list { display: flex; flex-direction: column; gap: 15px; width: 442px; }
.card { padding: 18px 15px 14px; border: 1px solid #434444; }
.card-short { height: 55px; }
.card h2 { display: flex; align-items: center; gap: 7px; font-size: 15px; font-weight: 400; line-height: 20px; }
.chips { display: flex; gap: 8px; margin-top: 9px; }
.chips span { display: flex; align-items: center; gap: 4px; height: 27px; padding: 0 12px; border-radius: 14px; background: #414242; font-size: 13px; }
.muted { color: #252829; }
.muted .chips { color: #2e3031; }
.muted .chips span { background: #474848; }
.muted h2 .icon { color: #271f1f; }
.card-empty { height: 19px; border: 1px solid #434444; }
.plan { position: relative; flex: 1; height: 477px; border: solid #424343; border-width: 1px 0; }
.plan-drawing { position: absolute; top: 48px; right: 95px; width: 70px; height: 320px; }
.plan-drawing path { fill: #000; }
.plan-drawing .wall { fill: none; stroke: #111313; stroke-width: 1; }
.plan-drawing .thin { fill: none; stroke: #2b2d2d; stroke-width: 1; }
.lock {
  position: absolute; top: 16px; right: 24px; display: grid; place-items: center; width: 38px; height: 38px;
  padding: 0; border: 0; border-radius: 50%; background: #0c1012; color: #585959;
}
.steps { position: absolute; right: 31px; bottom: 14px; display: flex; flex-direction: column; gap: 4px; }
.steps button { display: grid; place-items: center; width: 24px; height: 24px; padding: 0; border: 0; border-bottom: 1px solid #333; background: #454545; }
.steps button:disabled { background: #494949; color: #262829; }
.unplaced { margin-top: 31px; font-size: 15px; line-height: 20px; font-weight: 600; }

/* Dialog */
.overlay { position: fixed; inset: 0; padding: 125px 175px 0 244px; }
.modal { overflow: hidden; border-radius: 4px; background: #8d8d8d; box-shadow: 0 12px 34px 6px rgba(10, 14, 14, .36); }
.modal-head {
  display: flex; align-items: center; justify-content: space-between; height: 85px; padding: 0 35px 0 30px;
  background: #818381; border-bottom: 1px solid #6f7170;
}
.pill { padding: 9px 15px; border: 1px solid #4c4f4e; border-radius: 20px; background: #8d8d8d; font-size: 15px; line-height: 20px; font-weight: 700; }
.modal-main { display: flex; height: 601px; }
.side { display: flex; flex-direction: column; width: 191px; background: #818381; border-right: 1px solid #737574; font-size: 13px; }
.side a { padding: 15px 30px 16px; line-height: 19px; border-bottom: 1px solid #666968; }
.side .current { background: #2d3638; color: #979999; }
.delete { display: flex; align-items: center; gap: 8px; margin-top: auto; padding: 0 0 17px 16px; border: 0; background: none; color: #451b20; line-height: 20px; font-weight: 500; }
.pane { flex: 1; padding: 15px 12px 30px 13px; }
.spot { padding: 15px 18px 16px 16px; background: #fbfbfb; }
.spot-row, .addr-row { display: flex; align-items: center; justify-content: space-between; color: #6f6f6f; }
.spot-row { height: 25px; padding: 0 1px; }
.spot h2 { font-size: 15px; font-weight: 500; color: #1c1f20; }
.addr-row { height: 35px; margin: 19px 8px 27px 1px; }
.addr-row p { align-self: flex-start; font-size: 15px; line-height: 26px; color: #444; }
.addr-tools { display: flex; align-items: center; gap: 26px; }
.map { position: relative; height: 383px; overflow: hidden; }
.map-art { display: block; width: 100%; height: 100%; }
.street { fill: none; stroke: #e0e0e0; stroke-width: 1; }
.wroad, .yroad, .ycase, .oroad, .ocase, .rroad, .rcase { fill: none; stroke-linejoin: round; stroke-linecap: round; }
.wroad { stroke: #efefef; stroke-width: 2; }
.ycase { stroke: #d3d3a6; stroke-width: 4; }
.yroad { stroke: #eff0a8; stroke-width: 3; }
.ocase { stroke: #d9b48c; stroke-width: 4; }
.oroad { stroke: #efc8a2; stroke-width: 3; }
.rcase { stroke: #dd9f95; stroke-width: 5; }
.rroad { stroke: #e9ada2; stroke-width: 4; }
.rail path { fill: none; stroke: #929294; stroke-width: 2; }
.railb path { fill: none; stroke: #808080; stroke-width: 2; stroke-dasharray: 16 2; }
.tram { fill: none; stroke: #85857c; stroke-width: 1; }
.border { fill: none; stroke: #9a8ea6; stroke-width: 2; }
.ferry path { fill: none; stroke: #8292e6; stroke-width: 1; stroke-dasharray: 6 4; }
.tile { fill: none; stroke: #f6f8f8; stroke-width: 1; }
.tile-soft { fill: none; stroke: #e6e8e6; stroke-width: 1; }
.places text {
  fill: #454545; stroke: rgba(255, 255, 255, .6); stroke-width: 2; paint-order: stroke;
  font: 11px "Noto Sans", sans-serif; text-anchor: middle;
}
.places .city { font-size: 15px; }
.refs text { fill: #c65353; font: italic 10px "Noto Sans", sans-serif; text-anchor: middle; }
.credit {
  position: absolute; right: 0; bottom: 0; padding: 0 5px; background: rgba(255, 255, 255, .8);
  color: #333; font: 11px/16px "Liberation Sans", sans-serif;
}
.credit a { color: #2a7cb0; }
.flag { display: inline-block; width: 12px; height: 8px; }
.pane-foot { display: flex; justify-content: space-between; padding: 0 19px 0 17px; }
.cancel, .save { height: 35px; border-radius: 3px; font-size: 13px; }
.cancel { width: 92px; border: 1px solid #555858; border-top-color: #777979; background: none; color: #525454; }
.save { width: 137px; border: 0; background: #515859; color: #8b8d8d; }
```
